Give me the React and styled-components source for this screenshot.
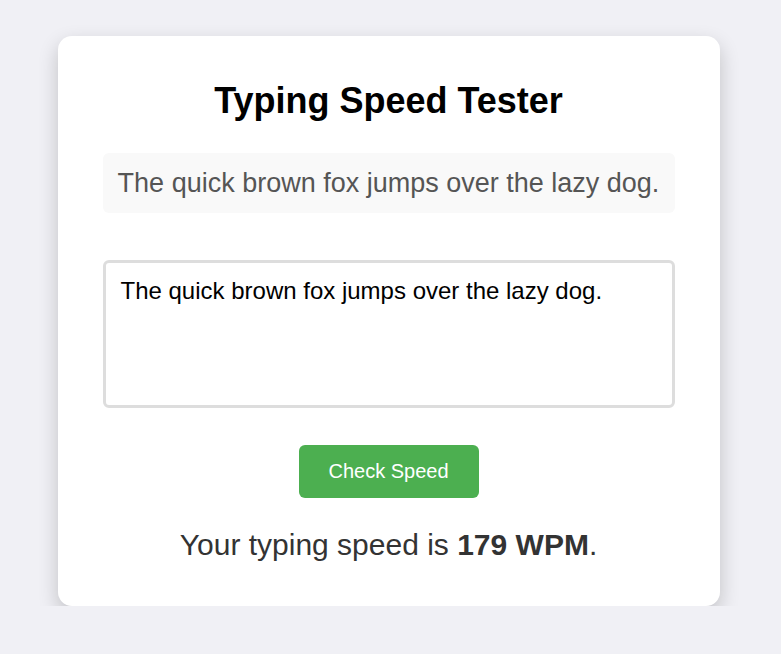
import { useState } from 'react';
import styled, { createGlobalStyle } from 'styled-components';

const GlobalStyle = createGlobalStyle`
    body {
        margin: 0;
        background: #f0f0f5;
        font-family: 'Liberation Sans', Arial, sans-serif;
    }
`;

const SAMPLE = 'The quick brown fox jumps over the lazy dog.';

export default function App() {
    const [value, setValue] = useState(SAMPLE);

    return (
        <>
            <GlobalStyle />
            <Page>
                <Card>
                    <Title>Typing Speed Tester</Title>
                    <Sample>{SAMPLE}</Sample>
                    <Input
                        value={value}
                        onChange={e => setValue(e.target.value)}
                    />
                    <Button type="button">Check Speed</Button>
                    <Result>
                        Your typing speed is <strong>179 WPM</strong>.
                    </Result>
                </Card>
            </Page>
        </>
    );
}

const Page = styled.div({
    display: 'flex',
    justifyContent: 'center',
    padding: '36px 4px 0 0',
});

const Card = styled.div({
    width: '662px',
    boxSizing: 'border-box',
    padding: '44px 45px 44px',

    display: 'flex',
    flexDirection: 'column',
    alignItems: 'center',

    background: '#fff',
    borderRadius: '14px',
    boxShadow: '0 8px 20px rgba(0, 0, 0, 0.2)',
});

const Title = styled.h1({
    margin: 0,
    fontSize: '36px',
    lineHeight: '42px',
    fontWeight: 700,
    color: '#000',
});

const Sample = styled.div({
    alignSelf: 'stretch',
    marginTop: '31px',
    padding: '15px 8px',

    fontSize: '27px',
    lineHeight: '30px',
    textAlign: 'center',
    whiteSpace: 'nowrap',
    color: '#555',

    background: '#f9f9f9',
    borderRadius: '6px',
});

const Input = styled.textarea({
    alignSelf: 'stretch',
    boxSizing: 'border-box',
    height: '148px',
    marginTop: '47px',
    padding: '14px 15px',

    fontFamily: 'inherit',
    fontSize: '24px',
    lineHeight: '28px',
    color: '#000',

    border: '3px solid #ddd',
    borderRadius: '6px',
    resize: 'none',
    outline: 'none',
});

const Button = styled.button({
    width: '180px',
    height: '53px',
    marginTop: '37px',

    fontFamily: 'inherit',
    fontSize: '20px',
    color: '#fff',

    background: '#4caf50',
    border: 'none',
    borderRadius: '6px',
    cursor: 'pointer',
});

const Result = styled.p({
    margin: '30px 0 0',
    fontSize: '30px',
    lineHeight: '34px',
    color: '#333',
});
